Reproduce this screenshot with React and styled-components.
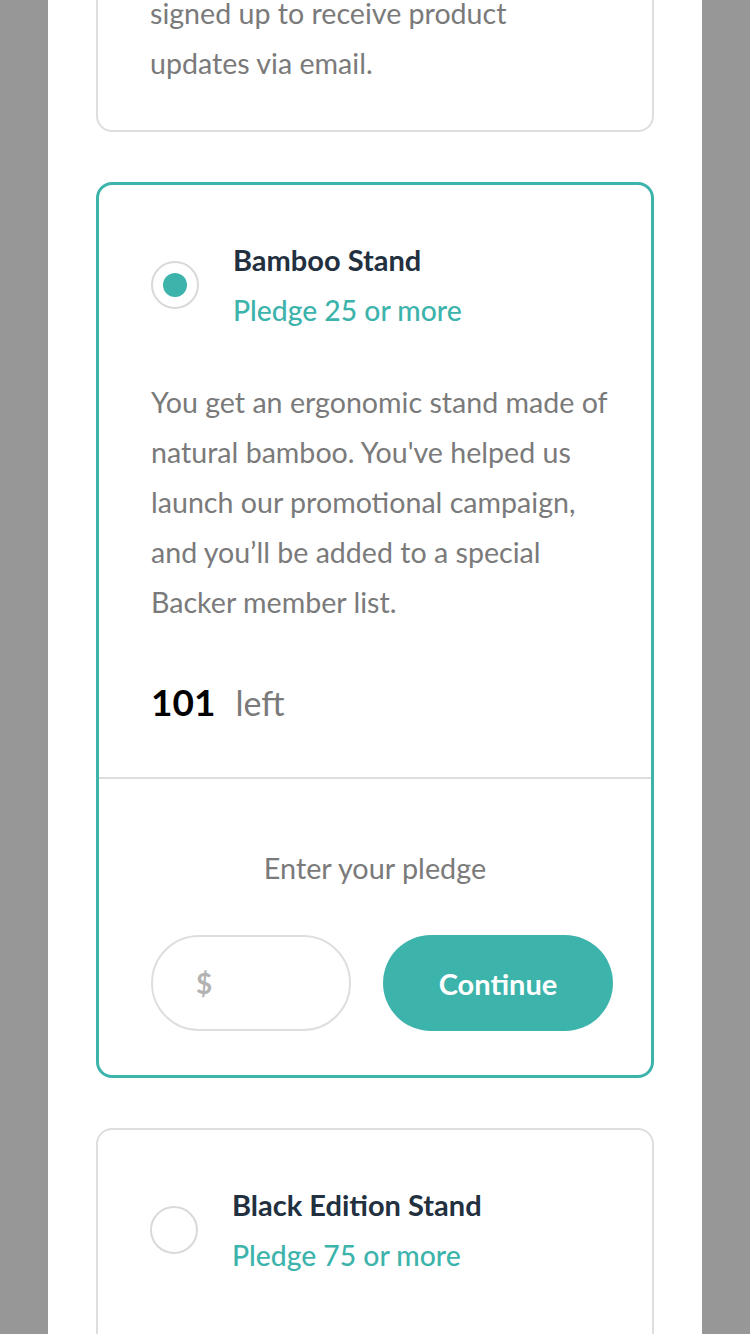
import React, { useState } from "react";
import styled, { createGlobalStyle } from "styled-components";

const teal = "#3cb3ab";
const navy = "#22303f";
const grey = "#7a7a7a";
const line = "#dedede";

const GlobalStyle = createGlobalStyle`
  html, body {
    margin: 0;
    padding: 0;
    height: 100%;
    overflow: hidden;
  }
  body {
    font-family: Lato, "Open Sans", sans-serif;
    background: #979797;
  }
`;

const Page = styled.div`
  display: flex;
  justify-content: center;
  height: 1334px;
  overflow: hidden;
  background: #979797;
`;

const Modal = styled.div`
  width: 558px;
  padding: 0 48px;
  background: #ffffff;
  display: flex;
  flex-direction: column;
  gap: 50px;
  /* the modal is scrolled: the first card is half gone above the fold */
  margin-top: ${(p) => p.scroll}px;
`;

const Card = styled.div`
  border: ${(p) => (p.selected ? `3px solid ${teal}` : `2px solid ${line}`)};
  border-radius: 16px;
  background: #ffffff;
  flex-shrink: 0;
`;

const Top = styled.div`
  padding: 50px 42px 42px 52px;
`;

const Header = styled.label`
  display: flex;
  align-items: center;
  gap: 34px;
  cursor: pointer;
`;

const Radio = styled.span`
  width: 44px;
  height: 44px;
  border: 2px solid #d9d9d9;
  border-radius: 50%;
  display: flex;
  align-items: center;
  justify-content: center;
  flex-shrink: 0;

  &::after {
    content: "";
    width: 24px;
    height: 24px;
    border-radius: 50%;
    background: ${(p) => (p.checked ? teal : "transparent")};
  }
`;

const Titles = styled.div`
  display: flex;
  flex-direction: column;
`;

const Title = styled.div`
  font-size: 29px;
  font-weight: 700;
  line-height: 50px;
  color: ${navy};
`;

const Pledge = styled.div`
  font-size: 28.3px;
  font-weight: 500;
  line-height: 50px;
  color: ${teal};
`;

const Description = styled.p`
  margin: 42px 0 0;
  font-size: 28.6px;
  line-height: 50px;
  color: ${grey};
`;

const Stock = styled.div`
  margin: 50px 0 7px;
  display: flex;
  align-items: baseline;
  gap: 20px;
  line-height: 50px;
`;

const Count = styled.span`
  font-size: 37px;
  font-weight: 700;
  color: #000000;
`;

const Left = styled.span`
  font-size: 34px;
  color: ${grey};
`;

const PledgeSection = styled.div`
  border-top: 2px solid ${line};
  padding: 64px 0 44px;
  display: flex;
  flex-direction: column;
  gap: 42px;
`;

const PledgeLabel = styled.div`
  text-align: center;
  font-size: 28.8px;
  line-height: 50px;
  color: ${grey};
`;

const PledgeRow = styled.div`
  display: flex;
  gap: 32px;
  padding-left: 52px;
`;

const AmountPill = styled.label`
  width: 200px;
  height: 96px;
  box-sizing: border-box;
  border: 2px solid ${line};
  border-radius: 48px;
  display: flex;
  align-items: center;
  padding: 0 24px 0 43px;
  gap: 10px;
`;

const Dollar = styled.span`
  font-size: 28px;
  font-weight: 700;
  color: #b3b3b3;
`;

const AmountInput = styled.input`
  width: 100%;
  border: none;
  outline: none;
  font-family: inherit;
  font-size: 28px;
  font-weight: 700;
  color: #000;
  background: transparent;
`;

const ContinueButton = styled.button`
  width: 230px;
  height: 96px;
  border: none;
  border-radius: 48px;
  background: ${teal};
  color: #ffffff;
  font-family: inherit;
  font-size: 29px;
  font-weight: 700;
  cursor: pointer;
`;

const rewards = [
  {
    id: "none",
    title: "Pledge with no reward",
    text:
      "Choose to support us without a reward if you simply believe in our project. As a backer, you will be signed up to receive product updates via email.",
  },
  {
    id: "bamboo",
    title: "Bamboo Stand",
    pledge: 25,
    text:
      "You get an ergonomic stand made of natural bamboo. You've helped us launch our promotional campaign, and you’ll be added to a special Backer member list.",
    left: 101,
  },
  {
    id: "black",
    title: "Black Edition Stand",
    pledge: 75,
    text:
      "You get a Black Special Edition computer stand and a personal thank you. You’ll be added to our Backer member list. Shipping is included.",
    left: 64,
  },
];

const App = () => {
  const [selected, setSelected] = useState("bamboo");
  const [amount, setAmount] = useState("");

  return (
    <>
      <GlobalStyle />
      <Page>
        <Modal scroll={-306}>
          {rewards.map((r) => {
            const isOn = r.id === selected;
            return (
              <Card key={r.id} selected={isOn}>
                <Top>
                  <Header onClick={() => setSelected(r.id)}>
                    <Radio checked={isOn} />
                    <Titles>
                      <Title>{r.title}</Title>
                      {r.pledge && <Pledge>Pledge {r.pledge} or more</Pledge>}
                    </Titles>
                  </Header>
                  <Description>{r.text}</Description>
                  {r.left !== undefined && (
                    <Stock>
                      <Count>{r.left}</Count>
                      <Left>left</Left>
                    </Stock>
                  )}
                </Top>
                {isOn && (
                  <PledgeSection>
                    <PledgeLabel>Enter your pledge</PledgeLabel>
                    <PledgeRow>
                      <AmountPill>
                        <Dollar>$</Dollar>
                        <AmountInput
                          value={amount}
                          onChange={(e) => setAmount(e.target.value)}
                        />
                      </AmountPill>
                      <ContinueButton>Continue</ContinueButton>
                    </PledgeRow>
                  </PledgeSection>
                )}
              </Card>
            );
          })}
        </Modal>
      </Page>
    </>
  );
};

export default App;
